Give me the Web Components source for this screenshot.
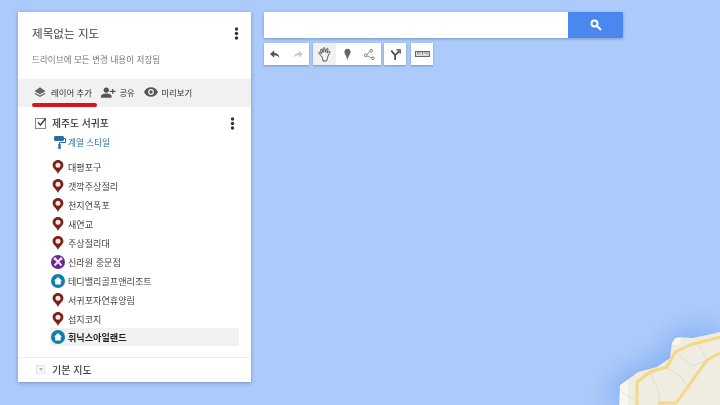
<!DOCTYPE html>
<html lang="ko">
<head>
<meta charset="utf-8">
<title>제목없는 지도</title>
<style>
  html, body { margin: 0; height: 100%; }
  body { width: 720px; height: 405px; overflow: hidden; font-family: "Noto Sans CJK KR", "Noto Sans", sans-serif; }
</style>
</head>
<body>
<map-app>
  <map-panel slot="panel">
    <map-action slot="actions" icon="layers" label="레이어 추가" underline></map-action>
    <map-action slot="actions" icon="share" label="공유"></map-action>
    <map-action slot="actions" icon="eye" label="미리보기"></map-action>
    <map-place kind="pin">대평포구</map-place>
    <map-place kind="pin">갯깍주상절리</map-place>
    <map-place kind="pin">천지연폭포</map-place>
    <map-place kind="pin">새연교</map-place>
    <map-place kind="pin">주상절리대</map-place>
    <map-place kind="food">신라원 중문점</map-place>
    <map-place kind="home">테디밸리골프앤리조트</map-place>
    <map-place kind="pin">서귀포자연휴양림</map-place>
    <map-place kind="pin">섭지코지</map-place>
    <map-place kind="home" selected>휘닉스아일랜드</map-place>
  </map-panel>
  <map-search slot="tools"></map-search>
  <map-toolbar slot="tools"></map-toolbar>
</map-app>

<script>
const kebab = `<svg width="5" height="13" viewBox="0 0 5 13"><circle cx="2.500" cy="2" r="1.700"/><circle cx="2.500" cy="6.500" r="1.700"/><circle cx="2.500" cy="11" r="1.700"/></svg>`;

const appTemplate = document.createElement('template');
appTemplate.innerHTML = `
  <style>
    :host { display: block; position: relative; width: 720px; height: 405px; background: #adcbfa; overflow: hidden; }
    .land { position: absolute; left: 0; top: 0; }
    .ui { position: relative; display: flex; gap: 13px; align-items: flex-start; padding: 12px 0 0 18px; filter: blur(.3px); }
    .tools { display: flex; flex-direction: column; gap: 5px; }
  </style>
  <svg class="land" width="720" height="405" viewBox="0 0 720 405">
    <defs>
      <filter id="b" x="-30%" y="-30%" width="160%" height="160%"><feGaussianBlur stdDeviation="13"/></filter>
      <filter id="s" x="-5%" y="-5%" width="110%" height="110%"><feGaussianBlur stdDeviation="0.7"/></filter>
    </defs>
    <path d="M606 405 612 382 636 366 660 358 668 340 680 330 705 328 720 324V405Z" fill="#84aff4" filter="url(#b)"/>
    <g filter="url(#s)">
      <path d="M619 405 620 385 630 378 638 372 657 367 670 358 672 342 678 337 692 338 707 335 720 332V405Z" fill="#efece2"/>
      <path d="M672 345 675 338 681 338 680 344Z M620 386 628 380 628 405 620 405Z" fill="#f8f7f1"/>
      <g fill="none" stroke="#d9d6cb" stroke-width="0.7">
        <path d="M675 352 692 366 707 360"/>
        <path d="M667 367 682 378 690 390"/>
        <path d="M650 372 658 390 660 403"/>
        <path d="M622 392 637 402"/>
        <path d="M698 343 707 360"/>
      </g>
      <g fill="none" stroke="#f4d985" stroke-width="3" stroke-linejoin="round">
        <path d="M637 405 637 382 650 372 667 367 675 352 690 345 720 337"/>
        <path d="M677 402 707 360 720 353"/>
        <path d="M658 403H677"/>
      </g>
    </g>
  </svg>
  <div class="ui">
    <slot name="panel"></slot>
    <div class="tools"><slot name="tools"></slot></div>
  </div>
`;
class MapApp extends HTMLElement {
  constructor() {
    super();
    this.attachShadow({mode: 'open'}).appendChild(appTemplate.content.cloneNode(true));
  }
}

const panelTemplate = document.createElement('template');
panelTemplate.innerHTML = `
  <style>
    :host { display: block; width: 233px; height: 370px; background: #fff; color: #333; box-shadow: 0 1px 4px rgba(40,70,120,.45); }
    .head { height: 67px; box-sizing: border-box; padding: 13px 12px 0 14px; }
    .title { display: flex; justify-content: space-between; align-items: center; height: 16px; font-size: 11.6px; color: #444; }
    .title svg, .layer svg.k { fill: #333; }
    .saved { margin-top: 11px; font-size: 8.6px; line-height: 14px; color: #777; }
    .actions { display: flex; align-items: center; height: 28px; background: #f1f1f1; padding-left: 16px; gap: 9.5px; }
    .layer { display: flex; align-items: center; height: 16px; margin-top: 8px; padding: 0 16px 0 17px; font-size: 9.8px; color: #333; font-weight: 500; }
    .check { width: 9px; height: 9px; border: 1px solid #888; position: relative; margin-right: 6px; background: #fff; }
    .check svg { position: absolute; left: 0; top: -2px; }
    .name { flex: 1; }
    .style { display: flex; align-items: center; gap: 2px; height: 16px; margin: 3px 0 7px 36px; color: #2a6da3; font-size: 8.6px; }
    .style svg { flex: none; }
    .places { display: flex; flex-direction: column; padding: 0 12px 0 32px; }
    .base { display: flex; align-items: center; height: 23px; margin-top: 11px; border-top: 1px solid #ececec; padding-left: 18px; font-size: 10px; color: #444; font-weight: 500; }
    .tri { width: 9px; height: 9px; box-sizing: border-box; margin-right: 7px; border: 1px solid #e6e6e6; background: #f7f7f7; display: flex; align-items: center; justify-content: center; }
    .tri::after { content: ""; border: 2.5px solid transparent; border-top: 3px solid #b5b5b5; border-bottom: 0; }
  </style>
  <div class="head">
    <div class="title"><span>제목없는 지도</span>${kebab}</div>
    <div class="saved">드라이브에 모든 변경 내용이 저장됨</div>
  </div>
  <div class="actions"><slot name="actions"></slot></div>
  <div class="layer">
    <span class="check"><svg width="11" height="11" viewBox="0 0 11 11"><path d="M2 5.5 4.5 8 9.5 1.5" fill="none" stroke="#333" stroke-width="1.3"/></svg></span>
    <span class="name">제주도 서귀포</span>
    <svg class="k" width="5" height="13" viewBox="0 0 5 13"><circle cx="2.500" cy="2" r="1.700"/><circle cx="2.500" cy="6.500" r="1.700"/><circle cx="2.500" cy="11" r="1.700"/></svg>
  </div>
  <div class="style">
    <svg width="12" height="13" viewBox="0 0 12 13"><path d="M0 1.5C0 .7.6 0 1.5 0H8.5C9.3 0 10 .7 10 1.5V3.5C10 4.3 9.3 5 8.5 5H1.5C.6 5 0 4.3 0 3.5Z" fill="#2a6da3"/><path d="M10 2.5H11.5V6.5H5.5V8.5" fill="none" stroke="#2a6da3" stroke-width="1"/><rect x="4.3" y="8" width="2.4" height="5" fill="#2a6da3"/></svg>
    <span>계열 스타일</span>
  </div>
  <div class="places"><slot></slot></div>
  <div class="base"><span class="tri"></span>기본 지도</div>
`;
class MapPanel extends HTMLElement {
  constructor() {
    super();
    this.attachShadow({mode: 'open'}).appendChild(panelTemplate.content.cloneNode(true));
  }
}

const actionIcons = {
  layers: `<svg width="12" height="12" viewBox="0 0 14 14" fill="#666"><path d="M7 1.500 13.500 6 7 9.500 .5 6Z"/><path d="M1.800 8.200 7 11 12.200 8.200 13.500 9 7 12.800 .5 9Z"/></svg>`,
  share: `<svg width="15" height="11" viewBox="0 0 17 12" fill="#555"><circle cx="6" cy="3.200" r="3"/><path d="M0 12V10C0 8 3.500 7 6 7S12 8 12 10V12Z"/><path d="M12.500 2H14V4H16.500V5.500H14V7.500H12.500V5.500H10V4H12.500Z"/></svg>`,
  eye: `<svg width="14" height="10" viewBox="0 0 16 11"><path d="M0 5.500C1.500 2.200 4.500 0 8 0S14.500 2.200 16 5.500C14.500 8.800 11.500 11 8 11S1.500 8.800 0 5.500Z" fill="#555"/><circle cx="8" cy="5.500" r="3.300" fill="#f1f1f1"/><circle cx="8" cy="5.500" r="1.900" fill="#555"/></svg>`
};
const actionTemplate = document.createElement('template');
actionTemplate.innerHTML = `
  <style>
    :host { display: flex; align-items: center; gap: 3px; position: relative; box-sizing: border-box; height: 28px; padding-bottom: 2px; font-size: 8.4px; color: #2c2c2c; white-space: nowrap; }
    :host([underline]) { gap: 5px; }
    .line { position: absolute; left: -2px; right: -5px; top: 24px; height: 4px; background: #d81616; border-radius: 2px; }
    .icon { display: flex; }
  </style>
  <span class="icon"></span><span class="label"></span><span class="line" hidden></span>
`;
class MapAction extends HTMLElement {
  constructor() {
    super();
    this.attachShadow({mode: 'open'}).appendChild(actionTemplate.content.cloneNode(true));
  }
  connectedCallback() {
    const root = this.shadowRoot;
    root.querySelector('.icon').innerHTML = actionIcons[this.getAttribute('icon')];
    root.querySelector('.label').textContent = this.getAttribute('label');
    root.querySelector('.line').hidden = !this.hasAttribute('underline');
  }
}

const placeIcons = {
  pin: `<svg width="12" height="14" viewBox="0 0 12 14"><path d="M6 14C4.800 10.600 .6 8.600 .6 5.300 .6 2.300 3 0 6 0S11.400 2.300 11.400 5.300C11.400 8.600 7.200 10.600 6 14Z" fill="#7d1f1a"/><circle cx="6" cy="5.200" r="2.500" fill="#f5e9e2"/></svg>`,
  food: `<svg width="14" height="14" viewBox="0 0 14 14"><circle cx="7" cy="7" r="7" fill="#6e2390"/><path d="M4 3.500 10.500 10.500M10 3.500 3.500 10.500" stroke="#efe4f5" stroke-width="2"/><circle cx="10" cy="3.800" r="1.500" fill="#efe4f5"/><circle cx="4" cy="3.800" r="1.500" fill="#efe4f5"/></svg>`,
  home: `<svg width="14" height="14" viewBox="0 0 14 14"><circle cx="7" cy="7" r="7" fill="#0f7fae"/><path d="M7 3 11 6.800H9.800V10.500H4.200V6.800H3Z" fill="#fff"/></svg>`
};
const placeTemplate = document.createElement('template');
placeTemplate.innerHTML = `
  <style>
    :host { display: flex; align-items: center; gap: 3px; height: 19px; padding-left: 1px; font-size: 9.1px; color: #444; white-space: nowrap; }
    :host([selected]) { background: #f1f1f1; font-weight: 700; color: #222; height: 18px; }
    .icon { display: flex; justify-content: center; width: 14px; }
  </style>
  <span class="icon"></span><slot></slot>
`;
class MapPlace extends HTMLElement {
  constructor() {
    super();
    this.attachShadow({mode: 'open'}).appendChild(placeTemplate.content.cloneNode(true));
  }
  connectedCallback() {
    this.shadowRoot.querySelector('.icon').innerHTML = placeIcons[this.getAttribute('kind')];
  }
}

const searchTemplate = document.createElement('template');
searchTemplate.innerHTML = `
  <style>
    :host { display: flex; width: 359px; height: 26px; box-shadow: 0 1px 3px rgba(40,70,120,.4); }
    .input { flex: 1; background: #fff; }
    .btn { width: 55px; background: #4a87ee; display: flex; align-items: center; justify-content: center; border-radius: 0 1px 1px 0; }
  </style>
  <div class="input"></div>
  <div class="btn"><svg width="12" height="12" viewBox="0 0 12 12"><circle cx="4.500" cy="4.500" r="3" fill="none" stroke="#fff" stroke-width="2"/><path d="M7 7 11 11" stroke="#fff" stroke-width="2.200"/></svg></div>
`;
class MapSearch extends HTMLElement {
  constructor() {
    super();
    this.attachShadow({mode: 'open'}).appendChild(searchTemplate.content.cloneNode(true));
  }
}

const toolbarTemplate = document.createElement('template');
toolbarTemplate.innerHTML = `
  <style>
    :host { display: flex; height: 22px; }
    .group { display: flex; background: #fff; box-shadow: 0 1px 2px rgba(40,70,120,.4); }
    .undo { width: 45px; margin-right: 4px; }
    .draw { width: 68px; margin-right: 3px; }
    .route { width: 22px; margin-right: 5px; }
    .ruler { width: 22px; }
    .b { flex: 1; display: flex; align-items: center; justify-content: center; }
    .on { background: #f1f1f1; }
  </style>
  <div class="group undo">
    <div class="b"><svg width="10" height="9" viewBox="0 0 12 10"><path d="M5 0V2.800C8.500 3 11 5 11.500 9.500 10 7 8 6 5 6V9L0 4.500Z" fill="#555"/></svg></div>
    <div class="b"><svg width="10" height="9" viewBox="0 0 12 10"><path d="M7 0V2.800C3.500 3 1 5 .5 9.500 2 7 4 6 7 6V9L12 4.500Z" fill="#ccc"/></svg></div>
  </div>
  <div class="group draw">
    <div class="b on"><svg width="13" height="15" viewBox="0 0 13 15" fill="none" stroke="#444" stroke-width=".9" stroke-linejoin="round"><path d="M3.500 9 .8 6.500C.2 5.600 1.200 4.800 2 5.500L3.500 6.800 2.600 3C2.400 2 3.800 1.600 4.100 2.600L5 5.500 5.300 1.300C5.400.4 6.700.4 6.800 1.300L7.200 5.200 8.700 1.800C9.100 1 10.300 1.400 10 2.300L8.900 6 11 4.500C11.900 4 12.500 4.900 11.900 5.600L10 9C9.500 11 9 13 8.500 14H5C4.800 12 4.300 10.500 3.500 9Z"/></svg></div>
    <div class="b"><svg width="7" height="13" viewBox="0 0 9 15"><path d="M4.500 0C2 0 .5 1.800 .5 4 .5 7 3.500 9.500 4.500 15 5.500 9.500 8.500 7 8.500 4 8.500 1.800 7 0 4.500 0Z" fill="#666"/></svg></div>
    <div class="b"><svg width="11" height="13" viewBox="0 0 13 14" fill="none" stroke="#666"><path d="M8 2.500 2 8 10 11.500" stroke-width=".8"/><circle cx="8.500" cy="2.500" r="1.600" fill="#fff"/><circle cx="2" cy="8" r="1.600" fill="#fff"/><circle cx="10.500" cy="11.500" r="1.600" fill="#fff"/></svg></div>
  </div>
  <div class="group route">
    <div class="b"><svg width="11" height="12" viewBox="0 0 13 14" fill="none" stroke="#444" stroke-width="2"><path d="M6 14V8.500L1.500 3M6 8.500 11 3.500"/><path d="M7.500 2H12V6.500" stroke-width="1.500"/></svg></div>
  </div>
  <div class="group ruler">
    <div class="b"><svg width="15" height="6" viewBox="0 0 15 6"><rect x=".5" y=".5" width="14" height="5" fill="#ddd" stroke="#666"/><path d="M3 1V3.500M5 1V2.500M7.500 1V3.500M10 1V2.500M12 1V3.500" stroke="#666" stroke-width=".8"/></svg></div>
  </div>
`;
class MapToolbar extends HTMLElement {
  constructor() {
    super();
    this.attachShadow({mode: 'open'}).appendChild(toolbarTemplate.content.cloneNode(true));
  }
}

window.customElements.define('map-app', MapApp);
window.customElements.define('map-panel', MapPanel);
window.customElements.define('map-action', MapAction);
window.customElements.define('map-place', MapPlace);
window.customElements.define('map-search', MapSearch);
window.customElements.define('map-toolbar', MapToolbar);
</script>
</body>
</html>
